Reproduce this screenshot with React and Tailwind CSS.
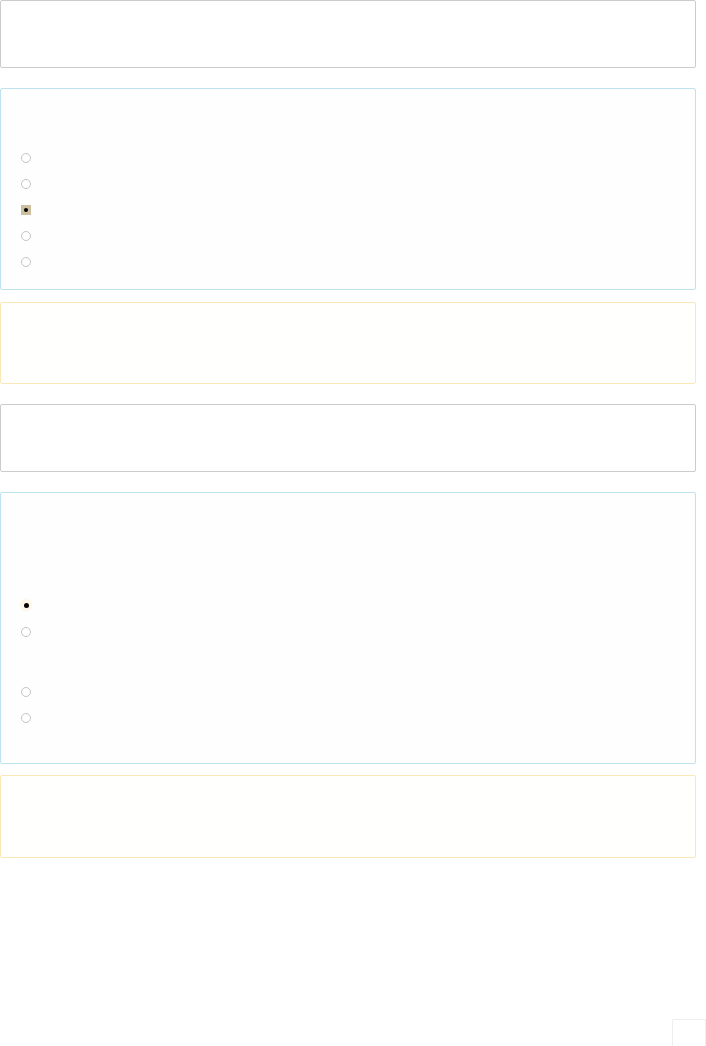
import React from "react";

const Radio = ({ checked, variant }) => {
  if (checked && variant === "square") {
    return (
      <span className="flex h-[10px] w-[10px] items-center justify-center bg-[#cbbf9f]">
        <span className="h-[4px] w-[4px] rounded-full bg-black" />
      </span>
    );
  }
  if (checked) {
    return (
      <span className="flex h-[10px] w-[10px] items-center justify-center rounded-full bg-[#fff6e8] shadow-[0_0_3px_#fbe6c4]">
        <span className="h-[5px] w-[5px] rounded-full bg-black" />
      </span>
    );
  }
  return <span className="block h-[10px] w-[10px] rounded-full border border-[#c4c4c4] bg-white" />;
};

const RadioRow = ({ checked, variant, className = "" }) => (
  <div className={`flex h-[26px] items-center pl-[20px] ${className}`}>
    <Radio checked={checked} variant={variant} />
  </div>
);

const App = () => {
  return (
    <div className="min-h-[1046px] w-[706px] bg-white font-['Liberation_Sans',sans-serif] relative">
      <div className="mr-[10px] flex flex-col">
        <div className="h-[68px] rounded-[2px] border border-[#cccccc] bg-white" />

        <div className="mt-[20px] h-[202px] rounded-[2px] border border-[#bfe3ee] bg-[#fefeff] pt-[56px]">
          <RadioRow />
          <RadioRow />
          <RadioRow checked variant="square" />
          <RadioRow />
          <RadioRow />
        </div>

        <div className="mt-[12px] h-[82px] rounded-[2px] border border-[#fbe8b8] bg-[#fffffd]" />

        <div className="mt-[20px] h-[68px] rounded-[2px] border border-[#cccccc] bg-white" />

        <div className="mt-[20px] h-[272px] rounded-[2px] border border-[#bfe3ee] bg-[#fefeff] pt-[99px]">
          <RadioRow checked variant="round" />
          <RadioRow className="h-[28px]" />
          <div className="h-[33px]" />
          <RadioRow />
          <RadioRow />
        </div>

        <div className="mt-[11px] h-[83px] rounded-[2px] border border-[#fbe8b8] bg-[#fffffd]" />
      </div>

      <div className="absolute bottom-0 right-0 h-[27px] w-[34px] rounded-t-[2px] border border-b-0 border-[#eeeeee] bg-white" />
    </div>
  );
};

export default App;
